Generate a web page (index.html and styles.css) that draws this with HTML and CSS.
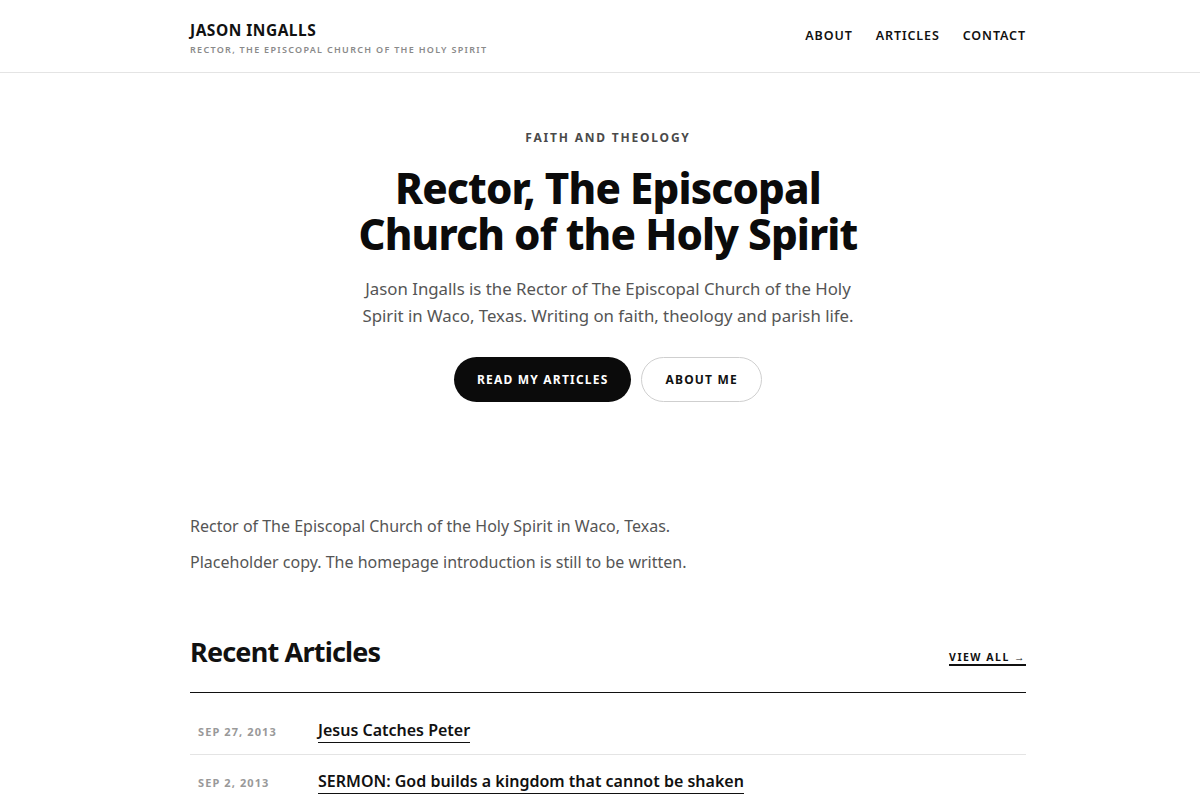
FILE: index.html
```html
<!DOCTYPE html>
<html lang="en">
  <head>
    <title>Jason Ingalls</title>
    <meta charset="UTF-8">
    <meta name="viewport" content="width=device-width, initial-scale=1.0">
    <link rel="stylesheet" href="styles.css">
  </head>
  <body>
    <header class="site-header">
      <div class="wrap header-inner">
        <div class="brand">
          <a href="#" class="brand-name">JASON INGALLS</a>
          <span class="brand-tag">Rector, The Episcopal Church of the Holy Spirit</span>
        </div>
        <nav class="nav">
          <a href="#">About</a>
          <a href="#">Articles</a>
          <a href="#">Contact</a>
        </nav>
      </div>
    </header>

    <section class="hero">
      <span class="kicker">Faith and Theology</span>
      <h1>Rector, The Episcopal Church of the Holy Spirit</h1>
      <p class="lead">Jason Ingalls is the Rector of The Episcopal Church of the Holy Spirit in Waco, Texas. Writing on faith, theology and parish life.</p>
      <div class="actions">
        <a href="#" class="btn btn-dark">Read my articles</a>
        <a href="#" class="btn btn-light">About me</a>
      </div>
    </section>

    <section class="wrap intro">
      <p>Rector of The Episcopal Church of the Holy Spirit in Waco, Texas.</p>
      <p>Placeholder copy. The homepage introduction is still to be written.</p>
    </section>

    <section class="wrap recent">
      <div class="recent-head">
        <h2>Recent Articles</h2>
        <a href="#" class="view-all">View all &rarr;</a>
      </div>
      <ul class="posts">
        <li>
          <span class="date">Sep 27, 2013</span>
          <a href="#" class="post-title">Jesus Catches Peter</a>
        </li>
        <li>
          <span class="date">Sep 2, 2013</span>
          <a href="#" class="post-title">SERMON: God builds a kingdom that cannot be shaken</a>
        </li>
      </ul>
    </section>
  </body>
</html>
```

FILE: styles.css
```css
body {
  margin: 0;
  padding-left: 16px;
  background: #fff;
  color: #111;
  font-family: "Noto Sans", "Open Sans", sans-serif;
}

a {
  color: inherit;
  text-decoration: none;
}

.wrap {
  width: 836px;
  margin: 0 auto;
}

.site-header {
  border-bottom: 1px solid #e4e4e4;
  margin-left: -16px;
  padding-left: 16px;
}

.header-inner {
  height: 72px;
  display: flex;
  align-items: center;
  justify-content: space-between;
}

.brand {
  display: flex;
  flex-direction: column;
  padding-top: 4px;
}

.brand-name {
  font-size: 15.5px;
  font-weight: 700;
  letter-spacing: 0.5px;
  line-height: 20px;
}

.brand-tag {
  font-size: 9px;
  font-weight: 600;
  letter-spacing: 1.3px;
  text-transform: uppercase;
  color: #8a8a8a;
  margin-top: 3px;
}

.nav {
  display: flex;
  gap: 23px;
  margin-top: -2px;
}

.nav a {
  font-size: 12.5px;
  font-weight: 600;
  letter-spacing: 0.9px;
  text-transform: uppercase;
}

.hero {
  text-align: center;
  padding-top: 56px;
  padding-bottom: 113px;
}

.kicker {
  display: block;
  font-size: 12px;
  font-weight: 700;
  letter-spacing: 1.8px;
  text-transform: uppercase;
  color: #4a4a4a;
}

.hero h1 {
  max-width: 520px;
  margin: 19px auto 0;
  font-size: 42px;
  line-height: 46px;
  font-weight: 800;
  letter-spacing: -0.85px;
  color: #0b0b0b;
}

.lead {
  max-width: 500px;
  margin: 18px auto 0;
  font-size: 16.8px;
  line-height: 27px;
  color: #555;
}

.actions {
  display: flex;
  justify-content: center;
  gap: 10px;
  margin-top: 28px;
}

.btn {
  height: 45px;
  box-sizing: border-box;
  display: inline-flex;
  align-items: center;
  padding: 0 23px;
  border-radius: 23px;
  font-size: 12px;
  font-weight: 700;
  letter-spacing: 1.2px;
  text-transform: uppercase;
}

.btn-dark {
  background: #0b0b0b;
  color: #fff;
}

.btn-light {
  border: 1px solid #cfcfcf;
  color: #111;
}

.intro p {
  margin: 0 0 14px;
  font-size: 16px;
  line-height: 22px;
  color: #555;
}

.recent {
  margin-top: 61px;
}

.recent-head {
  display: flex;
  justify-content: space-between;
  align-items: flex-end;
  padding-bottom: 22px;
  border-bottom: 1.5px solid #111;
}

.recent-head h2 {
  margin: 0;
  font-size: 27px;
  line-height: 36px;
  font-weight: 700;
  letter-spacing: -0.8px;
}

.view-all {
  font-size: 10.5px;
  font-weight: 700;
  letter-spacing: 1.5px;
  text-transform: uppercase;
  border-bottom: 2px solid #111;
  line-height: 14px;
  margin-bottom: 4px;
}

.posts {
  list-style: none;
  margin: 0;
  padding: 11px 0 0;
}

.posts li {
  display: flex;
  align-items: baseline;
  padding: 14px 0 11px 8px;
  border-bottom: 1px solid #e4e4e4;
}

.date {
  width: 120px;
  font-size: 11px;
  font-weight: 700;
  letter-spacing: 1.1px;
  text-transform: uppercase;
  color: #999;
}

.post-title {
  font-size: 16px;
  font-weight: 600;
  line-height: 24px;
  border-bottom: 1.5px solid #111;
}
```
